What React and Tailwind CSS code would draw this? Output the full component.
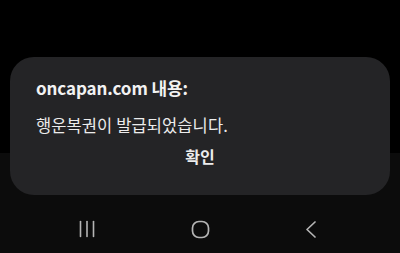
import React from 'react';

const font = { fontFamily: '"Noto Sans CJK KR", "Noto Sans", sans-serif' };

const App = () => {
  return (
    <div className='w-[400px] h-[253px] bg-black flex flex-col overflow-hidden' style={font}>
      {/* page behind the alert */}
      <div className='h-[57px] shrink-0 bg-black' />

      {/* alert dialog */}
      <div className='relative z-10 mx-[10px] h-[138px] shrink-0 rounded-[24px] bg-[#242426] px-[26px] pt-[19px]'>
        <p className='text-[17px] font-bold text-[#f2f2f2] leading-[24px] tracking-[-0.1px]'>oncapan.com 내용:</p>
        <p className='mt-[14px] text-[16.5px] text-[#ececec] leading-[22px] tracking-[0.1px]'>행운복권이 발급되었습니다.</p>
        <div className='mt-[9px] flex justify-center'>
          <button className='text-[16px] font-bold text-[#ececec] leading-[22px]'>확인</button>
        </div>
      </div>

      {/* navigation bar */}
      <div className='-mt-[42px] flex-1 bg-[#0c0c0c] pt-[42px]'>
        <div className='flex h-full items-center justify-between pl-[78px] pr-[82px] pt-[10px]'>
          <svg width='18' height='18' viewBox='0 0 18 18' fill='none' stroke='#b5b5b5' strokeWidth='1.6' strokeLinecap='round'>
            <line x1='2.5' y1='1.5' x2='2.5' y2='16.5' />
            <line x1='9' y1='1.5' x2='9' y2='16.5' />
            <line x1='15.5' y1='1.5' x2='15.5' y2='16.5' />
          </svg>
          <svg width='19' height='19' viewBox='0 0 19 19' fill='none' stroke='#b5b5b5' strokeWidth='1.7'>
            <rect x='1.5' y='1.5' width='16' height='16' rx='6.5' />
          </svg>
          <svg width='14' height='19' viewBox='0 0 14 19' fill='none' stroke='#b5b5b5' strokeWidth='1.7' strokeLinecap='round' strokeLinejoin='round'>
            <polyline points='11,2 3,9.5 11,17' />
          </svg>
        </div>
      </div>
    </div>
  );
};

export default App;
